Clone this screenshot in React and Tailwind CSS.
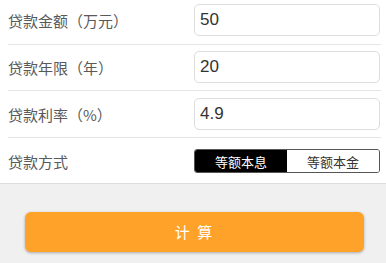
import { useState } from 'react';

const font = { fontFamily: '"Liberation Sans", "Noto Sans CJK SC", sans-serif' };
const cjk = { fontFamily: '"Noto Sans CJK SC", sans-serif' };

function Row({ label, value, className }) {
  return (
    <div className={`ml-2 mr-[5px] flex items-center border-b border-[#e5e5e5] ${className}`}>
      <span className="w-[186px] text-[15px] leading-none text-[#5a5a5a]" style={cjk}>{label}</span>
      <input
        readOnly
        value={value}
        className="h-8 w-[186px] rounded-[5px] border border-[#ddd] bg-white px-[5px] text-[17px] text-[#333] outline-none"
      />
    </div>
  );
}

export default function App() {
  const [mode, setMode] = useState(0);

  return (
    <div className="h-[263px] w-[386px] overflow-hidden bg-[#f0f0f0]" style={font}>
      <div className="bg-white border-b border-[#ddd]">
        <Row label="贷款金额（万元）" value="50" className="pt-[4px] pb-[8px]" />
        <Row label="贷款年限（年）" value="20" className="pt-[6px] pb-[7px]" />
        <Row label="贷款利率（%）" value="4.9" className="pt-[7px] pb-[7px]" />
        <div className="ml-2 mr-[5px] flex items-center pt-[11px] pb-[10px]">
          <span className="w-[186px] text-[15px] leading-none text-[#5a5a5a]" style={cjk}>贷款方式</span>
          <div className="flex h-6 w-[186px] overflow-hidden rounded-[3px] border border-[#555] text-[13px]" style={cjk}>
            {['等额本息', '等额本金'].map((t, i) => (
              <button
                key={t}
                onClick={() => setMode(i)}
                className={`flex-1 leading-none ${mode === i ? 'bg-black text-white' : 'bg-white text-[#333]'}`}
              >
                {t}
              </button>
            ))}
          </div>
        </div>
      </div>
      <div className="px-[25px] pt-[28px]">
        <button
          className="h-10 w-[339px] rounded-[6px] bg-[#ffa229] text-[15px] tracking-[2px] text-white shadow-[0_1px_3px_rgba(0,0,0,0.3)]"
          style={cjk}
        >
          计 算
        </button>
      </div>
    </div>
  );
}
